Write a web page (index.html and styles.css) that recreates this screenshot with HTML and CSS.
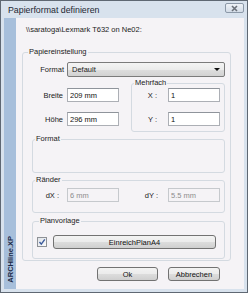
FILE: index.html
```html
<!DOCTYPE html>
<html lang="de">
<head>
  <meta charset="UTF-8">
  <meta name="viewport" content="width=device-width, initial-scale=1.0">
  <title>Papierformat definieren</title>
  <link rel="stylesheet" href="styles.css">
</head>
<body>
  <div class="window">
    <div class="titlebar">
      <span class="title">Papierformat definieren</span>
      <span class="close">
        <svg width="19" height="10" viewBox="0 0 19 10">
          <path d="M7 3 L12 8 M12 3 L7 8" stroke="#6b717a" stroke-width="1.6"/>
        </svg>
      </span>
    </div>
    <div class="client">
      <div class="brand"><span>ARCHline.XP</span></div>
      <div class="content">
        <div class="printer">\\saratoga\Lexmark T632 on Ne02:</div>

        <fieldset class="group main">
          <legend>Papiereinstellung</legend>
          <div class="format-row">
            <label>Format</label>
            <div class="select">Default<span class="arrow"></span></div>
          </div>

          <div class="size">
            <div class="dims">
              <div class="row"><label>Breite</label><input type="text" value="209 mm"></div>
              <div class="row"><label>Höhe</label><input type="text" value="296 mm"></div>
            </div>
            <fieldset class="group multi">
              <legend>Mehrfach</legend>
              <div class="row"><label>X :</label><input type="text" value="1"></div>
              <div class="row"><label>Y :</label><input type="text" value="1"></div>
            </fieldset>
          </div>

          <fieldset class="group sub format-box">
            <legend>Format</legend>
          </fieldset>

          <fieldset class="group sub margins">
            <legend>Ränder</legend>
            <div class="margin-row">
              <label>dX :</label><input type="text" value="6 mm" disabled>
              <label>dY :</label><input type="text" value="5.5 mm" disabled>
            </div>
          </fieldset>

          <fieldset class="group sub template">
            <legend>Planvorlage</legend>
            <div class="template-row">
              <span class="check">
                <svg width="10" height="10" viewBox="0 0 10 10">
                  <path d="M2.5 5 L4.3 7.2 L7.8 2.3" fill="none" stroke="#3d5c9c" stroke-width="1.4"/>
                </svg>
              </span>
              <button type="button" class="btn wide">EinreichPlanA4</button>
            </div>
          </fieldset>
        </fieldset>

        <div class="actions">
          <button type="button" class="btn ok">Ok</button>
          <button type="button" class="btn cancel">Abbrechen</button>
        </div>
      </div>
    </div>
  </div>
</body>
</html>
```

FILE: styles.css
```css
* {
  box-sizing: border-box;
}

body {
  margin: 0;
  font-family: "Liberation Sans", Arial, sans-serif;
  font-size: 7.5px;
  color: #1b1b1b;
}

.window {
  width: 248px;
  height: 293px;
  border: 1px solid #5f6873;
  background-color: #d8e2ed;
  padding: 0 3px 3px 3px;
  display: flex;
  flex-direction: column;
}

.titlebar {
  height: 17px;
  display: flex;
  align-items: center;
  justify-content: space-between;
  padding-left: 4px;
}

.title {
  font-size: 8.8px;
  color: #1e2833;
  margin-top: 1px;
}

.close {
  width: 19px;
  height: 10px;
  margin-top: -4px;
  margin-right: 0;
  border: 1px solid #8c99a8;
  border-radius: 2px;
  background: linear-gradient(#eef2f7, #d3dce7);
  display: flex;
}

.close svg {
  margin: -1px;
}

.client {
  flex: 1;
  display: flex;
}

.brand {
  width: 12px;
  background-color: #a7bfdb;
  display: flex;
  align-items: flex-end;
  justify-content: center;
}

.brand span {
  writing-mode: vertical-rl;
  transform: rotate(180deg);
  font-weight: bold;
  font-size: 7.5px;
  color: #1c2a48;
  margin-bottom: 6px;
}

.content {
  flex: 1;
  background-color: #f5f3f6;
  padding-top: 7px;
  display: flex;
  flex-direction: column;
}

.printer {
  margin-left: 10px;
  line-height: 10px;
}

/* group boxes */
.group {
  margin: 0;
  padding: 0;
  min-width: 0;
  border: 1px solid #d4dae1;
  border-radius: 3px;
}

.group legend {
  padding: 0 1px;
  margin-left: 2px;
  line-height: 10px;
}

.main {
  margin: 12px 13px 0 6px;
  padding: 5px 5px 1px 0;
}

.main > legend {
  margin-left: 5px;
}

label {
  text-align: right;
}

.format-row {
  display: flex;
  align-items: center;
  height: 15px;
}

.format-row label {
  width: 41px;
  margin-right: 3px;
}

.select {
  width: 158px;
  height: 15px;
  border: 1px solid #7b7b7b;
  border-radius: 2px;
  background: linear-gradient(#f4f4f4 0%, #ebebeb 50%, #dedede 50%, #d2d2d2 100%);
  padding: 0 3px 0 4px;
  display: flex;
  align-items: center;
  justify-content: space-between;
}

.arrow {
  width: 0;
  height: 0;
  border-left: 3px solid transparent;
  border-right: 3px solid transparent;
  border-top: 3px solid #111;
  margin-right: 1px;
}

.size {
  display: grid;
  grid-template-columns: 108px 94px;
  margin-top: 1px;
}

.dims {
  padding-top: 10px;
  display: flex;
  flex-direction: column;
  gap: 10px;
}

.row {
  display: flex;
  align-items: center;
  height: 14px;
}

.dims label {
  width: 40px;
  margin-right: 4px;
}

input[type="text"] {
  width: 52px;
  height: 14px;
  margin: 0;
  padding: 0 2px;
  font-family: inherit;
  font-size: 7.5px;
  color: #111;
  background-color: #fff;
  border: 1px solid #acafb5;
  border-top-color: #8f949b;
}

input[type="text"]:disabled {
  color: #8d8d8d;
  background-color: #f5f3f6;
  border-color: #c6c9cd;
}

.multi {
  padding: 0 3px 5px 0;
  display: flex;
  flex-direction: column;
  gap: 10px;
}

.multi label {
  width: 25px;
  margin-right: 11px;
}

.sub {
  margin: 2px 0 0 9px;
}

.format-box {
  height: 39px;
}

.margins {
  padding: 3px 0 10px 0;
}

.margin-row {
  display: grid;
  grid-template-columns: 34px 52px 49px 52px;
  align-items: center;
  height: 14px;
}

.margin-row label:first-child {
  padding-right: 8px;
}

.margin-row label {
  padding-right: 10px;
}

.template {
  margin-top: 3px;
  padding: 9px 8px 9px 4px;
}

.template-row {
  display: flex;
  align-items: center;
  gap: 6px;
}

.check {
  width: 10px;
  height: 10px;
  border: 1px solid #8e9196;
  background: linear-gradient(135deg, #dfe3e8, #fbfbfb);
  display: flex;
}

.check svg {
  margin: -1px;
}

.btn {
  height: 14px;
  padding: 0;
  font-family: inherit;
  font-size: 7.5px;
  color: #111;
  border: 1px solid #727272;
  border-radius: 3px;
  background: linear-gradient(#f3f3f3 0%, #ebebeb 50%, #dddddd 50%, #cfcfcf 100%);
}

.wide {
  flex: 1;
}

.actions {
  margin-top: 6px;
  padding-right: 24px;
  display: flex;
  justify-content: flex-end;
  gap: 10px;
}

.ok {
  width: 61px;
}

.cancel {
  width: 52px;
}
```
